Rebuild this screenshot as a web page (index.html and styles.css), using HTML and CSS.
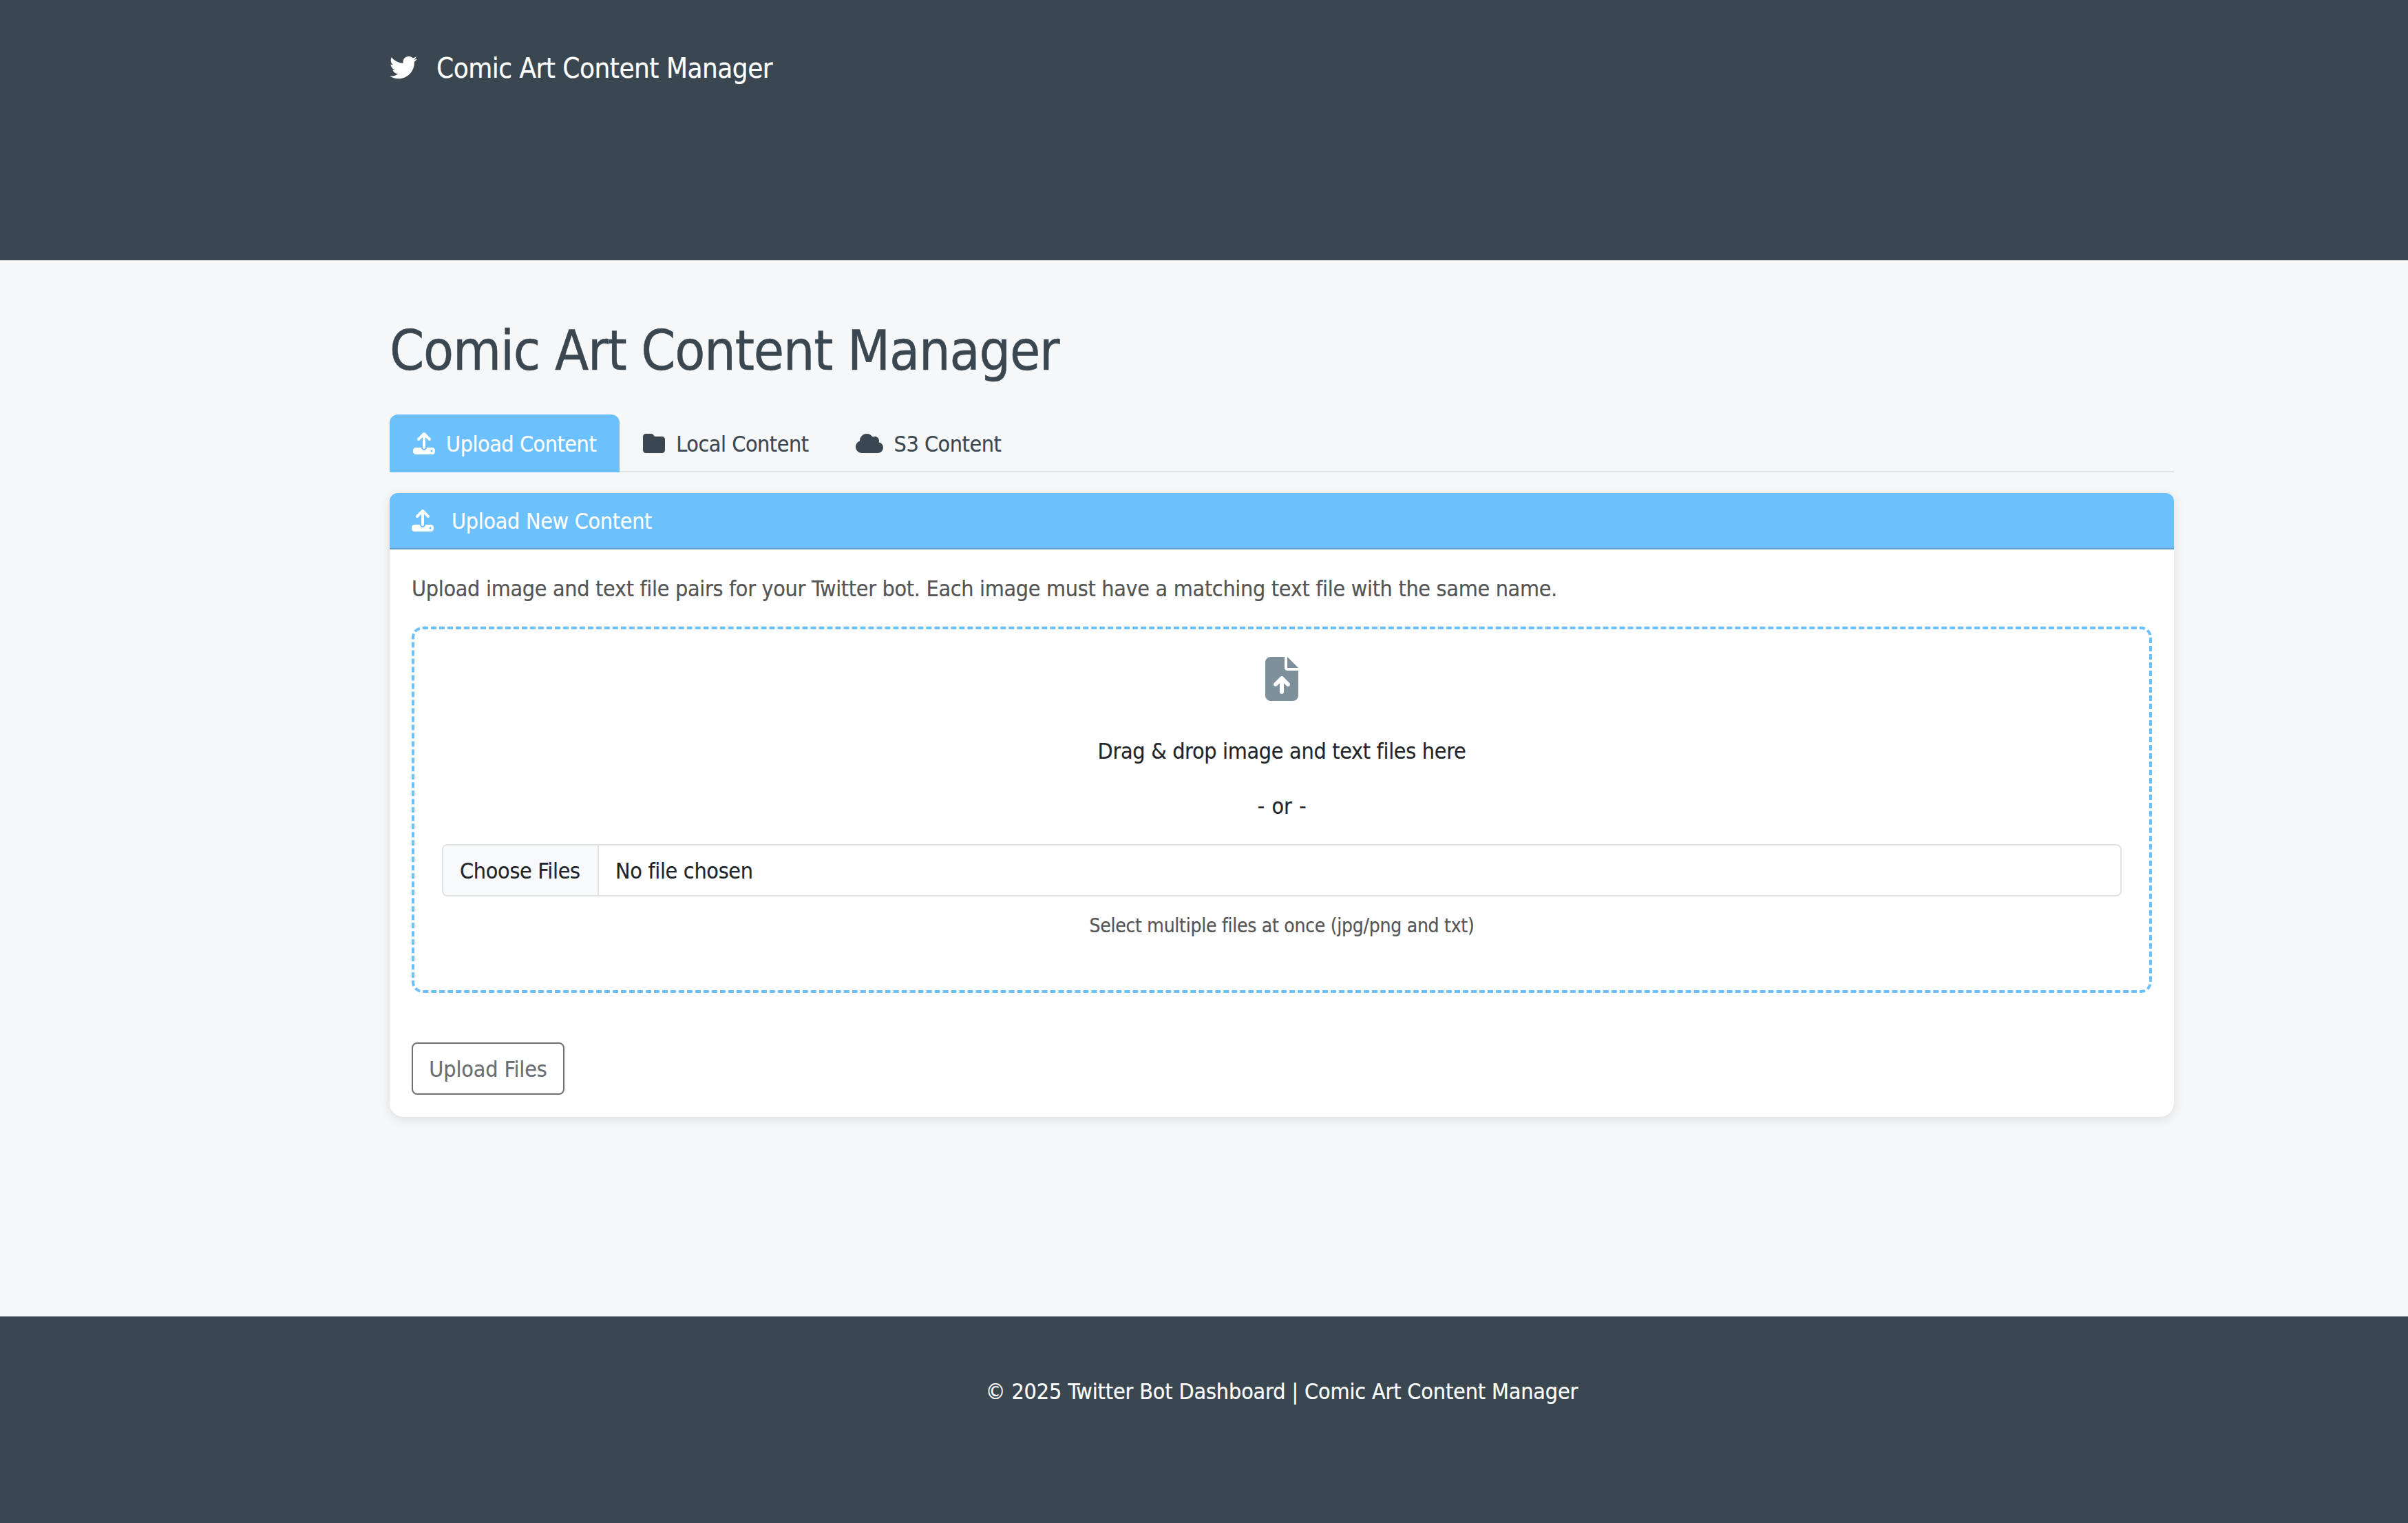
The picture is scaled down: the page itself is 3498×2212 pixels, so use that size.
FILE: index.html
```html
<!DOCTYPE html>
<html>
	<head>
		<meta charset="UTF-8">
		<title>Comic Art Content Manager</title>
		<link rel="stylesheet" href="styles.css">
	</head>
	<body>
		<header class="navbar">
			<div class="wrap brand">
				<svg class="brand-icon" viewBox="0 0 512 512"><path d="M459.37 151.716c.325 4.548.325 9.097.325 13.645 0 138.72-105.583 298.558-298.558 298.558-59.452 0-114.68-17.219-161.137-47.106 8.447.974 16.568 1.299 25.34 1.299 49.055 0 94.213-16.568 130.274-44.832-46.132-.975-84.792-31.188-98.112-72.772 6.498.974 12.995 1.624 19.818 1.624 9.421 0 18.843-1.3 27.614-3.573-48.081-9.747-84.143-51.98-84.143-102.985v-1.299c13.969 7.797 30.214 12.67 47.431 13.319-28.264-18.843-46.781-51.005-46.781-87.391 0-19.492 5.197-37.36 14.294-52.954 51.655 63.675 129.3 105.258 216.365 109.807-1.624-7.797-2.599-15.918-2.599-24.04 0-57.828 46.782-104.934 104.934-104.934 30.213 0 57.502 12.67 76.67 33.137 23.715-4.548 46.456-13.32 66.599-25.34-7.798 24.366-24.366 44.833-46.132 57.827 21.117-2.273 41.584-8.122 60.426-16.243-14.292 20.791-32.161 39.308-52.628 54.253z"/></svg>
				<span>Comic Art Content Manager</span>
			</div>
		</header>

		<main class="wrap content">
			<h1>Comic Art Content Manager</h1>

			<nav class="tabs">
				<a class="tab active">
					<svg class="icon" viewBox="0 0 512 512"><path d="M288 109.3V352c0 17.7-14.3 32-32 32s-32-14.3-32-32V109.3l-73.4 73.4c-12.5 12.5-32.8 12.5-45.3 0s-12.5-32.8 0-45.3l128-128c12.5-12.5 32.8-12.5 45.3 0l128 128c12.5 12.5 12.5 32.8 0 45.3s-32.8 12.5-45.3 0L288 109.3zM64 352H192c0 35.3 28.7 64 64 64s64-28.7 64-64H448c35.3 0 64 28.7 64 64v32c0 35.3-28.7 64-64 64H64c-35.3 0-64-28.7-64-64V416c0-35.3 28.7-64 64-64zM432 456a24 24 0 1 0 0-48 24 24 0 1 0 0 48z"/></svg>
					Upload Content
				</a>
				<a class="tab">
					<svg class="icon" viewBox="0 0 512 512"><path d="M64 480H448c35.3 0 64-28.7 64-64V160c0-35.3-28.7-64-64-64H288c-10.1 0-19.6-4.7-25.6-12.8L243.2 57.6C231.1 41.5 212.1 32 192 32H64C28.7 32 0 60.7 0 96V416c0 35.3 28.7 64 64 64z"/></svg>
					Local Content
				</a>
				<a class="tab">
					<svg class="icon icon-wide" viewBox="0 0 640 512"><path d="M0 336c0 79.5 64.5 144 144 144H512c70.7 0 128-57.3 128-128c0-61.9-44-113.6-102.4-125.4c4.1-10.7 6.4-22.4 6.4-34.6c0-53-43-96-96-96c-17.8 0-34.4 4.8-48.7 13.2C367 64.2 315.3 32 256 32C167.6 32 96 103.6 96 192c0 2.7 .1 5.4 .2 8.1C40.2 219.8 0 273.2 0 336z"/></svg>
					S3 Content
				</a>
			</nav>

			<section class="card">
				<div class="card-header">
					<svg class="icon" viewBox="0 0 512 512"><path d="M288 109.3V352c0 17.7-14.3 32-32 32s-32-14.3-32-32V109.3l-73.4 73.4c-12.5 12.5-32.8 12.5-45.3 0s-12.5-32.8 0-45.3l128-128c12.5-12.5 32.8-12.5 45.3 0l128 128c12.5 12.5 12.5 32.8 0 45.3s-32.8 12.5-45.3 0L288 109.3zM64 352H192c0 35.3 28.7 64 64 64s64-28.7 64-64H448c35.3 0 64 28.7 64 64v32c0 35.3-28.7 64-64 64H64c-35.3 0-64-28.7-64-64V416c0-35.3 28.7-64 64-64zM432 456a24 24 0 1 0 0-48 24 24 0 1 0 0 48z"/></svg>
					Upload New Content
				</div>
				<div class="card-body">
					<p class="intro">Upload image and text file pairs for your Twitter bot. Each image must have a matching text file with the same name.</p>

					<div class="dropzone">
						<svg class="drop-icon" viewBox="0 0 384 512"><path d="M64 0C28.7 0 0 28.7 0 64V448c0 35.3 28.7 64 64 64H320c35.3 0 64-28.7 64-64V160H256c-17.7 0-32-14.3-32-32V0H64zM256 0V128H384L256 0zM216 408c0 13.3-10.7 24-24 24s-24-10.7-24-24V305.9l-31 31c-9.4 9.4-24.6 9.4-33.9 0s-9.4-24.6 0-33.9l72-72c9.4-9.4 24.6-9.4 33.9 0l72 72c9.4 9.4 9.4 24.6 0 33.9s-24.6 9.4-33.9 0l-31-31V408z"/></svg>
						<p class="drop-text">Drag &amp; drop image and text files here</p>
						<p class="drop-text drop-or">- or -</p>
						<div class="file-input">
							<span class="file-button">Choose Files</span>
							<span class="file-name">No file chosen</span>
						</div>
						<small class="hint">Select multiple files at once (jpg/png and txt)</small>
					</div>

					<button class="upload-btn" type="button">Upload Files</button>
				</div>
			</section>
		</main>

		<footer class="footer">
			<div class="wrap footer-text">© 2025 Twitter Bot Dashboard | Comic Art Content Manager</div>
		</footer>
	</body>
</html>
```

FILE: styles.css
```css
* {
	box-sizing: border-box;
}
body {
	margin: 0;
	min-height: 100vh;
	display: flex;
	flex-direction: column;
	background-color: #f6f7f9;
	color: #212529;
	font-family: "DejaVu Sans Condensed", "DejaVu Sans", sans-serif;
	font-size: 32px;
	line-height: 50px;
	letter-spacing: -0.3px;
	-webkit-text-stroke: 0.2px;
}
.wrap {
	width: 2592px;
	margin-left: 566px;
}
.navbar {
	height: 378px;
	background-color: #3b4750;
	color: #ffffff;
	padding-top: 69px;
}
.brand {
	display: flex;
	align-items: center;
	font-size: 40px;
	line-height: 60px;
	letter-spacing: -0.5px;
}
.brand-icon {
	width: 40px;
	height: 40px;
	margin-top: -2px;
	margin-right: 28px;
	fill: #ffffff;
}
.content {
	padding-top: 84px;
}
h1 {
	margin: 0 0 44px;
	color: #3b4750;
	font-size: 80px;
	font-weight: 400;
	line-height: 96px;
	letter-spacing: -1.15px;
	-webkit-text-stroke: 0.5px;
}
.tabs {
	display: flex;
	height: 84px;
	border-bottom: 2px solid #dee2e6;
	margin-bottom: 30px;
}
.tab {
	display: flex;
	align-items: center;
	height: 84px;
	padding: 2px 34px 0;
	border-radius: 12px 12px 0 0;
	color: #3b4750;
	letter-spacing: -0.45px;
}
.tab.active {
	background-color: #6cc0fc;
	color: #ffffff;
}
.icon {
	width: 32px;
	height: 32px;
	margin-top: -2px;
	margin-right: 16px;
	fill: currentColor;
}
.icon-wide {
	width: 40px;
}
.card {
	height: 906px;
	background-color: #ffffff;
	border-radius: 12px 12px 20px 20px;
	box-shadow: 0 4px 16px rgba(0, 0, 0, 0.1);
}
.card-header {
	display: flex;
	align-items: center;
	height: 82px;
	padding: 2px 32px 0;
	background-color: #6cc0fc;
	border-bottom: 2px solid #5a9fcf;
	border-radius: 12px 12px 0 0;
	color: #ffffff;
}
.card-header .icon {
	margin-right: 26px;
}
.card-body {
	padding: 32px;
}
.intro {
	margin: 0 0 30px;
	color: #555555;
}
.dropzone {
	height: 532px;
	padding: 40px;
	margin-bottom: 72px;
	border: 4px dashed #6cc0fc;
	border-radius: 16px;
	text-align: center;
}
.drop-icon {
	display: block;
	width: 48px;
	height: 64px;
	margin: 0 auto 48px;
	fill: #7f909d;
}
.drop-text {
	margin: 0 0 30px;
}
.drop-or {
	word-spacing: 2px;
}
.file-input {
	display: flex;
	height: 76px;
	border: 2px solid #dee2e6;
	border-radius: 8px;
	background-color: #ffffff;
	text-align: left;
}
.file-button {
	width: 226px;
	padding: 12px 24px 0;
	background-color: #f8f9fa;
	border-right: 2px solid #dee2e6;
	border-radius: 6px 0 0 6px;
}
.file-name {
	padding: 12px 24px 0;
}
.hint {
	display: block;
	margin-top: 22px;
	color: #555555;
	font-size: 28px;
	line-height: 42px;
	letter-spacing: -0.26px;
}
.upload-btn {
	display: block;
	width: 222px;
	height: 76px;
	padding: 2px 0 0;
	background-color: transparent;
	border: 2px solid #6e7075;
	border-radius: 8px;
	color: #6a6d72;
	font: inherit;
	letter-spacing: -0.14px;
}
.footer {
	height: 300px;
	margin-top: auto;
	background-color: #3b4750;
	color: #ffffff;
	padding-top: 84px;
}
.footer-text {
	text-align: center;
	letter-spacing: -0.13px;
}
```
